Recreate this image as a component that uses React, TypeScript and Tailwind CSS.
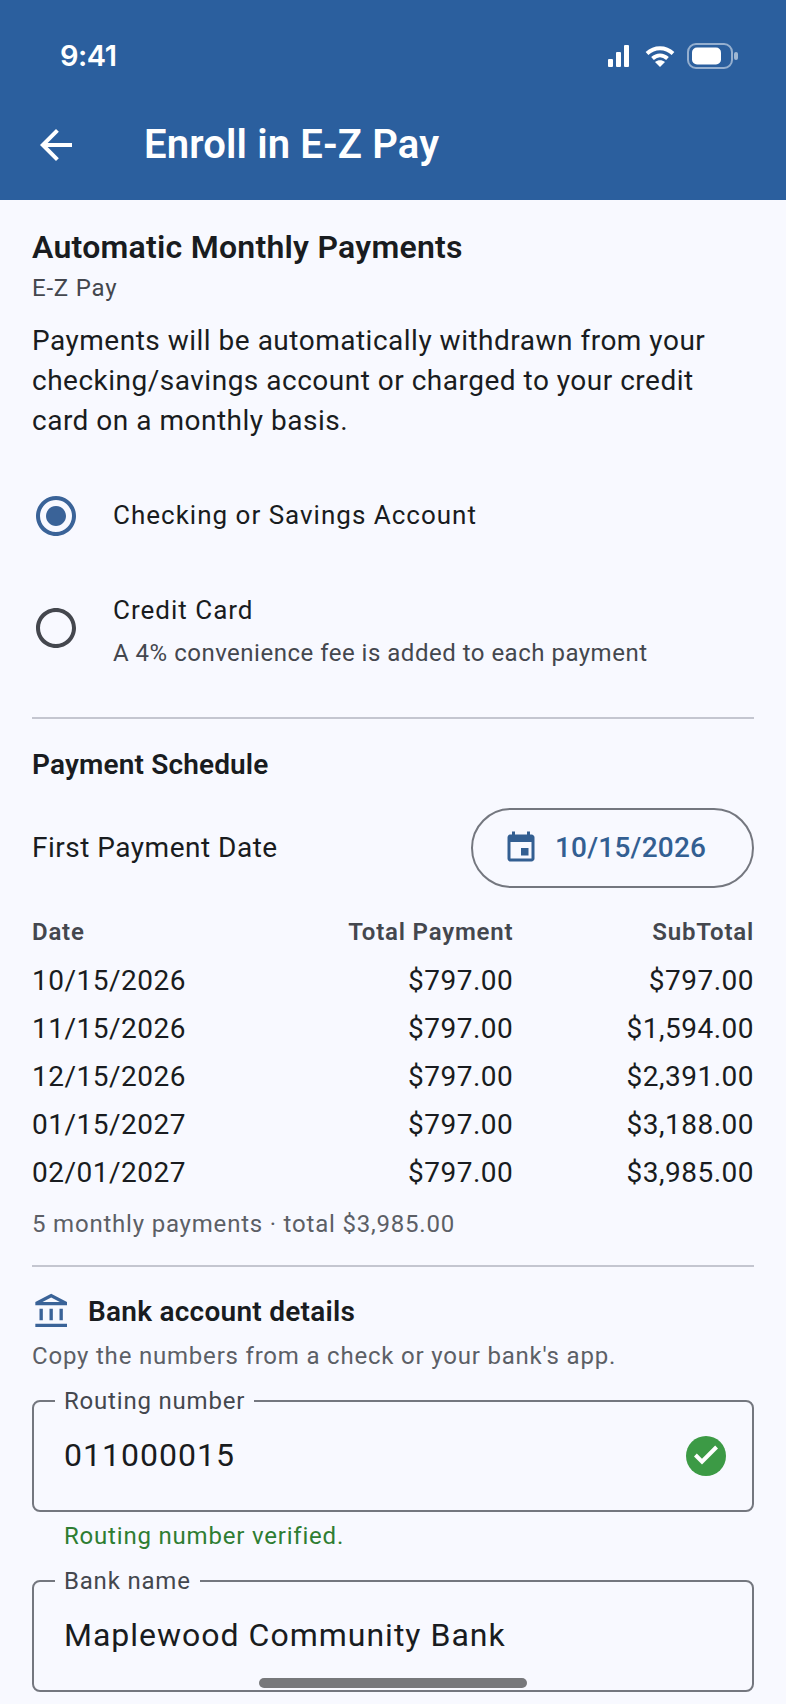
export default function App() {
  const rows = [
    ["10/15/2026", "$797.00", "$797.00"],
    ["11/15/2026", "$797.00", "$1,594.00"],
    ["12/15/2026", "$797.00", "$2,391.00"],
    ["01/15/2027", "$797.00", "$3,188.00"],
    ["02/01/2027", "$797.00", "$3,985.00"],
  ];
  return (
    <div className="relative w-[786px] h-[1704px] overflow-hidden bg-[#f8f9ff] text-[#191c20] font-['Roboto',sans-serif] tracking-[0.5px]">
      <header className="h-[200px] bg-[#2b5f9e] text-white">
        <div className="h-[90px] pt-[33px] pl-[60px] pr-[48px] flex justify-between items-start">
          <span className="mt-[1px] font-['Inter',sans-serif] font-semibold text-[29px] leading-[44px] tracking-[-0.5px]">9:41</span>
          <div className="flex items-center h-[46px]">
            <svg width="21" height="22" viewBox="0 0 21 22" fill="#fff">
              <rect x="0" y="14" width="5" height="8" rx="1" />
              <rect x="8" y="7" width="5" height="15" rx="1" />
              <rect x="16" y="0" width="5" height="22" rx="1" />
            </svg>
            <svg className="ml-[16px]" width="30" height="22" viewBox="0 0 30 22" fill="none" stroke="#fff" strokeWidth="4">
              <path d="M2 8.5C9.5 1.5 20.5 1.5 28 8.5" />
              <path d="M7.5 13.500C12 9.500 18 9.500 22.500 13.500" />
              <path d="M15 22l-5-5c3-2.4 7-2.4 10 0z" fill="#fff" stroke="none" />
            </svg>
            <svg className="ml-[12px]" width="51" height="26" viewBox="0 0 51 26" fill="none">
              <rect x="1" y="1" width="44" height="24" rx="8" stroke="#fff" strokeOpacity="0.5" strokeWidth="2" />
              <rect x="5" y="4.500" width="29" height="17" rx="5" fill="#fff" />
              <rect x="47" y="9" width="4" height="8" rx="2" fill="#fff" fillOpacity="0.55" />
            </svg>
          </div>
        </div>
        <div className="h-[110px] flex items-start pt-[31px] pl-[32px]">
          <svg width="48" height="48" viewBox="0 0 24 24" fill="#fff">
            <path d="M20 11H7.83l5.59-5.59L12 4l-8 8 8 8 1.41-1.41L7.830 13H20v-2z" />
          </svg>
          <h1 className="ml-[64px] text-[40px] leading-[48px] font-semibold tracking-[0.15px]">Enroll in E-Z Pay</h1>
        </div>
      </header>

      <main className="px-[32px]">
        <h2 className="pt-[27px] text-[32px] leading-[40px] font-semibold tracking-[0.25px]">Automatic Monthly Payments</h2>
        <p className="mt-[5px] text-[24px] leading-[32px] text-[#44474e] tracking-[0.8px]">E-Z Pay</p>
        <p className="mt-[17px] text-[28px] leading-[40px]">
          Payments will be automatically withdrawn from your checking/savings account or charged to your credit card on a monthly basis.
        </p>

        <div className="mt-[51px] flex items-center h-[48px]">
          <svg className="shrink-0" width="48" height="48" viewBox="0 0 24 24" fill="#3a6398">
            <path d="M12 7c-2.760 0-5 2.240-5 5s2.240 5 5 5 5-2.240 5-5-2.240-5-5-5zm0-5C6.480 2 2 6.480 2 12s4.480 10 10 10 10-4.480 10-10S17.520 2 12 2zm0 18c-4.420 0-8-3.580-8-8s3.580-8 8-8 8 3.580 8 8-3.580 8-8 8z" />
          </svg>
          <span className="ml-[33px] pb-[2px] text-[26px] leading-[36px] tracking-[1px]">Checking or Savings Account</span>
        </div>

        <div className="mt-[52px] flex items-start">
          <svg className="shrink-0 mt-[12px]" width="48" height="48" viewBox="0 0 24 24" fill="#44474e">
            <path d="M12 2C6.480 2 2 6.480 2 12s4.480 10 10 10 10-4.480 10-10S17.520 2 12 2zm0 18c-4.420 0-8-3.580-8-8s3.580-8 8-8 8 3.580 8 8-3.580 8-8 8z" />
          </svg>
          <div className="ml-[33px]">
            <div className="text-[26px] leading-[36px] tracking-[1px]">Credit Card</div>
            <div className="mt-[8px] text-[24px] leading-[34px] text-[#44474e]">A 4% convenience fee is added to each payment</div>
          </div>
        </div>

        <div className="mt-[47px] h-[2px] bg-[#c4c6d0]" />

        <h3 className="mt-[28px] text-[28px] leading-[36px] font-semibold tracking-[0.15px]">Payment Schedule</h3>

        <div className="mt-[25px] flex items-center justify-between">
          <span className="text-[28px] leading-[36px]">First Payment Date</span>
          <div className="w-[283px] h-[80px] rounded-full border-2 border-[#74777f] flex items-center pl-[30px]">
            <svg width="36" height="36" viewBox="0 0 24 24" fill="#335f92">
              <path d="M17 12h-5v5h5v-5zM16 1v2H8V1H6v2H5c-1.110 0-1.990.9-1.990 2L3 19c0 1.100.89 2 2 2h14c1.100 0 2-.9 2-2V5c0-1.100-.9-2-2-2h-1V1h-2zm3 18H5V8h14v11z" />
            </svg>
            <span className="ml-[16px] text-[28px] leading-[36px] font-medium text-[#335f92] tracking-[0.2px]">10/15/2026</span>
          </div>
        </div>

        <div className="mt-[28px] grid grid-cols-3 text-[24px] leading-[32px] font-semibold text-[#44474e] tracking-[0.8px]">
          <span>Date</span>
          <span className="text-right">Total Payment</span>
          <span className="text-right">SubTotal</span>
        </div>
        <div className="mt-[9px]">
          {rows.map((r) => (
            <div key={r[0]} className="grid grid-cols-3 h-[48px] items-center text-[28px] leading-[36px]">
              <span>{r[0]}</span>
              <span className="text-right">{r[1]}</span>
              <span className="text-right">{r[2]}</span>
            </div>
          ))}
        </div>
        <p className="mt-[11px] text-[24px] leading-[32px] text-[#5c5f66] tracking-[0.8px]">5 monthly payments · total $3,985.00</p>

        <div className="mt-[25px] h-[2px] bg-[#c4c6d0]" />

        <div className="mt-[25px] flex items-center h-[40px]">
          <svg width="40" height="40" viewBox="0 0 24 24" fill="#3a6398">
            <path d="M6.500 10h-2v7h2v-7zm6 0h-2v7h2v-7zm8.500 9H2v2h19v-2zm-2.500-9h-2v7h2v-7zm-7-6.740L16.710 6H6.290l5.210-2.740m0-2.260L2 6v2h19V6l-9.500-5z" />
          </svg>
          <span className="ml-[16px] text-[28px] leading-[36px] font-semibold tracking-[0.25px]">Bank account details</span>
        </div>
        <p className="mt-[8px] text-[24px] leading-[32px] text-[#5c5f66] tracking-[0.8px]">Copy the numbers from a check or your bank's app.</p>

        <div className="relative mt-[28px] h-[112px] rounded-lg border-2 border-[#74777f] flex items-center justify-between pl-[30px] pr-[22px]">
          <span className="absolute left-[21px] -top-[17px] bg-[#f8f9ff] px-[9px] text-[24px] leading-[32px] text-[#44474e] tracking-[0.8px]">Routing number</span>
          <span className="text-[32px] leading-[40px] -mt-[2px] tracking-[1px]">011000015</span>
          <svg width="48" height="48" viewBox="0 0 24 24">
            <circle cx="12" cy="12" r="10" fill="#3c9a45" />
            <path d="M10 16.200l-4-4 1.410-1.410L10 13.370l6.590-6.590L18 8.200z" fill="#fff" />
          </svg>
        </div>
        <p className="mt-[7px] pl-[32px] text-[24px] leading-[34px] text-[#2e7d32] tracking-[0.8px]">Routing number verified.</p>

        <div className="relative mt-[27px] h-[112px] rounded-lg border-2 border-[#74777f] flex items-center pl-[30px]">
          <span className="absolute left-[21px] -top-[17px] bg-[#f8f9ff] px-[9px] text-[24px] leading-[32px] text-[#44474e] tracking-[0.8px]">Bank name</span>
          <span className="text-[32px] leading-[40px] -mt-[2px] tracking-[1px]">Maplewood Community Bank</span>
        </div>
      </main>

      <div className="absolute left-[259px] top-[1678px] w-[268px] h-[10px] rounded-full bg-[#77787b]" />
    </div>
  );
}
